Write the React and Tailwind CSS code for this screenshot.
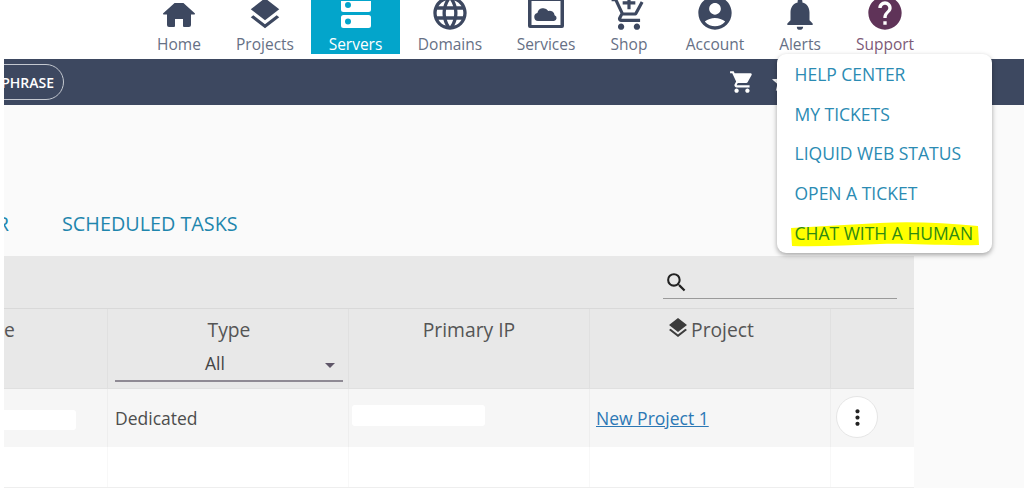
import { MdLayers, MdLanguage, MdAddShoppingCart, MdAccountCircle, MdNotifications, MdHelp, MdShoppingCart, MdStar, MdSearch, MdMoreVert } from 'react-icons/md'

function ServersIcon() {
  return (
    <svg width="32" height="32" viewBox="0 0 32 32" fill="currentColor">
      <path fillRule="evenodd" d="M3.500 -4h25a2.500 2.500 0 0 1 2.500 2.500v10a2.500 2.500 0 0 1-2.500 2.500h-25a2.500 2.500 0 0 1-2.500-2.500v-10a2.500 2.500 0 0 1 2.500-2.500zM8 1a3 3 0 1 0 0 6a3 3 0 0 0 0-6z" />
      <path fillRule="evenodd" d="M3.500 14h25a2.500 2.500 0 0 1 2.500 2.500v8a2.500 2.500 0 0 1-2.500 2.500h-25a2.500 2.500 0 0 1-2.500-2.500v-8a2.500 2.500 0 0 1 2.500-2.500zM8 17.500a3 3 0 1 0 0 6a3 3 0 0 0 0-6z" />
    </svg>
  )
}

function ServicesIcon() {
  return (
    <svg width="38" height="34" viewBox="0 0 38 34" fill="currentColor">
      <path fillRule="evenodd" d="M3 -2h32a2 2 0 0 1 2 2v27a2 2 0 0 1-2 2H3a2 2 0 0 1-2-2V0a2 2 0 0 1 2-2zM4.500 2v24h29V2z" />
      <path d="M11 22a4 4 0 0 1-.6-7.900a6 6 0 0 1 10.900-2.200a5 5 0 0 1 6.300 4.300a3 3 0 0 1-.6 5.800z" />
    </svg>
  )
}

function HomeIcon() {
  return (
    <svg width="32" height="30" viewBox="0 0 32 30" fill="currentColor">
      <path d="M16 -4L31.500 10a.8.8 0 0 1-.5 1.500H28V22a2 2 0 0 1-2 2h-5a1 1 0 0 1-1-1v-7h-8v7a1 1 0 0 1-1 1H6a2 2 0 0 1-2-2V11.500H1a.8.8 0 0 1-.5-1.500z" />
    </svg>
  )
}

const navItems = [
  { label: 'Home', width: 'w-[86px]', icon: <HomeIcon /> },
  { label: 'Projects', width: 'w-[86px] mr-[3px]', icon: <MdLayers size={38} /> },
  { label: 'Servers', width: 'w-[89px]', active: true, icon: <ServersIcon /> },
  { label: 'Domains', width: 'w-[100px]', icon: <MdLanguage size={40} /> },
  { label: 'Services', width: 'w-[92px]', icon: <ServicesIcon /> },
  { label: 'Shop', width: 'w-[74px]', icon: <MdAddShoppingCart size={38} /> },
  { label: 'Account', width: 'w-[98px]', icon: <MdAccountCircle size={40} /> },
  { label: 'Alerts', width: 'w-[72px]', icon: <MdNotifications size={38} /> },
  { label: 'Support', width: 'w-[98px]', support: true, icon: <MdHelp size={40} /> },
]

const supportLinks = ['HELP CENTER', 'MY TICKETS', 'LIQUID WEB STATUS', 'OPEN A TICKET']

export default function App() {
  return (
    <div className="relative w-[1024px] h-[488px] overflow-hidden bg-white font-['Open_Sans',sans-serif] flex flex-col">
      {/* top nav */}
      <nav className="h-[59px] shrink-0 pl-[136px]">
        <div className="flex h-[54px] overflow-hidden">
          {navItems.map((item) => (
            <div
              key={item.label}
              className={`${item.width} h-[54px] shrink-0 flex flex-col items-center justify-end ${item.active ? 'bg-[#03a5cb] text-white' : item.support ? 'text-[#5f3358]' : 'text-[#3d4860]'}`}
            >
              <div className="h-[32px] flex items-end justify-center shrink-0">{item.icon}</div>
              <span className={`text-[15.500px] leading-[20px] mt-[1px] ${item.active ? 'text-white' : item.support ? 'text-[#7d5a77]' : 'text-[#667085]'}`}>{item.label}</span>
            </div>
          ))}
        </div>
      </nav>

      <div className="flex-1 ml-[4px] flex flex-col bg-[#fafafa]">
        {/* dark bar */}
        <div className="h-[46px] shrink-0 bg-[#3d4860] flex items-center overflow-hidden">
          <div className="h-[36px] -ml-[40px] w-[100px] border border-[#c4c8d0] rounded-full text-white text-[14px] font-semibold flex items-center justify-end pr-[9px] shrink-0">PHRASE</div>
          <MdShoppingCart size={26} className="text-white ml-[665px] shrink-0" />
          <MdStar size={24} className="text-white ml-[15px] shrink-0" />
        </div>

        {/* tabs */}
        <div className="h-[151px] shrink-0 flex items-end pb-[19px] overflow-hidden">
          <span className="text-[19.800px] leading-[27px] text-[#1f86ad] -ml-[95px] w-[100px] text-right shrink-0">SERVER</span>
          <span className="text-[19.800px] leading-[27px] text-[#1f86ad] ml-[53px] shrink-0">SCHEDULED TASKS</span>
        </div>

        {/* table */}
        <div className="w-[910px] flex-1 bg-white flex flex-col overflow-hidden border-b border-[#eeeeee]">
          <div className="h-[53px] shrink-0 bg-[#e8e8e8] border-b border-[#d9d9d9] flex justify-end pr-[17px]">
            <div className="w-[234px] h-[43px] border-b border-[#9a9a9a] flex items-end pb-[3px] pl-[1px]">
              <MdSearch size={25} className="text-[#222222]" />
            </div>
          </div>

          <div className="h-[80px] shrink-0 bg-[#e8e8e8] grid grid-cols-[104px_241px_241px_241px_83px] text-[19.300px] text-[#555555] border-b border-[#e0e0e0]">
            <div className="border-r border-[#e0e0e0] overflow-hidden pt-[7px] leading-[27px]"><span className="block -ml-[43px]">Name</span></div>
            <div className="border-r border-[#e0e0e0] pt-[7px] pl-[7px] pr-[5px] flex flex-col items-center leading-[27px]">
              <span>Type</span>
              <div className="w-full h-[35px] mt-[4px] border-b-2 border-[#8f8a94] flex items-center relative text-[17.500px] justify-center pr-[28px] text-[#444444]">
                All
                <span className="absolute right-[8px] top-[16px] w-0 h-0 border-l-[5px] border-r-[5px] border-t-[5px] border-l-transparent border-r-transparent border-t-[#5f5668]" />
              </div>
            </div>
            <div className="border-r border-[#e0e0e0] pt-[7px] text-center leading-[27px]">Primary IP</div>
            <div className="border-r border-[#e0e0e0] pt-[7px] flex justify-center items-start leading-[27px]">
              <MdLayers size={24} className="text-[#3c3c3c] mr-[1px]" />
              <span>Project</span>
            </div>
            <div />
          </div>

          <div className="h-[58px] shrink-0 bg-[#f6f6f6] grid grid-cols-[104px_241px_241px_241px_83px] text-[17.500px] text-[#4d4d4d]">
            <div className="border-r border-[#eeeeee] flex items-center pt-[3px]"><div className="w-[72px] h-[20px] bg-white rounded-r-[3px]" /></div>
            <div className="border-r border-[#eeeeee] flex items-center pl-[7px]">Dedicated</div>
            <div className="border-r border-[#eeeeee] flex items-center pl-[3px] pb-[5px]"><div className="w-[133px] h-[21px] bg-white rounded-[3px]" /></div>
            <div className="border-r border-[#eeeeee] flex items-center pl-[6px]"><a className="underline text-[#2c78b5]">New Project 1</a></div>
            <div className="flex items-center pl-[5px] pb-[2px]">
              <div className="w-[42px] h-[42px] rounded-full bg-white border border-[#e6e6e6] flex items-center justify-center">
                <MdMoreVert size={25} className="text-[#222222]" />
              </div>
            </div>
          </div>

          <div className="flex-1 grid grid-cols-[104px_241px_241px_241px_83px]">
            <div className="border-r border-[#f8f8f8]" />
            <div className="border-r border-[#f8f8f8]" />
            <div className="border-r border-[#f8f8f8]" />
            <div className="border-r border-[#f8f8f8]" />
            <div />
          </div>
        </div>
      </div>

      {/* support dropdown */}
      <div className="absolute left-[777px] top-[54px] w-[215px] h-[199px] bg-white rounded-[9px] shadow-[0_2px_5px_rgba(0,0,0,0.35)] pl-[17.500px] text-[17.500px] text-[#2b8bb3]">
        {supportLinks.map((link) => (
          <div key={link} className="h-[39.800px] flex items-center">{link}</div>
        ))}
        <div className="relative h-[39.800px] flex items-center text-[#2f8a12]">
          <svg className="absolute -left-[5px] top-[8px]" width="190" height="27" viewBox="0 0 190 27">
            <path d="M1 7 C30 5 60 4 90 2 C120 0 155 2 188 5 L189 24 C150 25 120 22 90 23 C60 24 30 26 2 25 Z" fill="#ffff00" />
          </svg>
          <span className="relative">CHAT WITH A HUMAN</span>
        </div>
      </div>
    </div>
  )
}
